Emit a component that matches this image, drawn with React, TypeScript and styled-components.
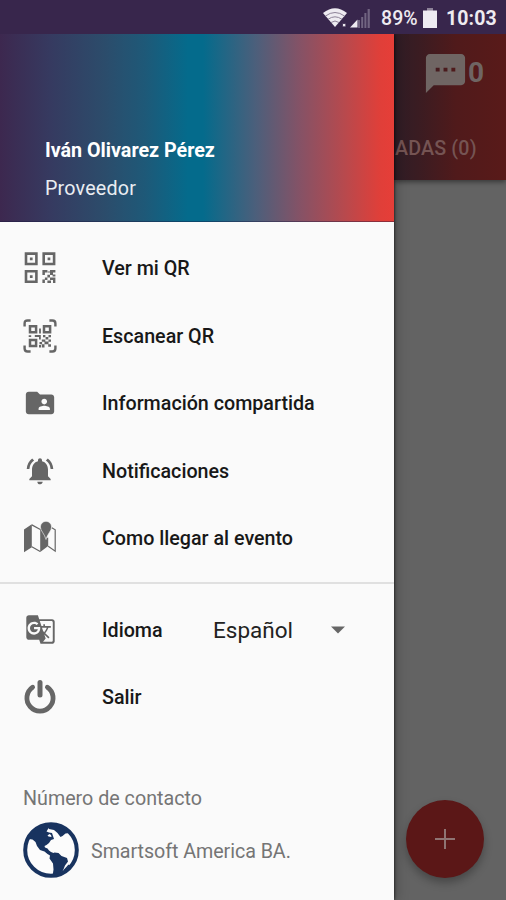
import React from "react";
import styled, { createGlobalStyle } from "styled-components";
import { MdFolderShared, MdNotificationsActive, MdGTranslate, MdSms } from "react-icons/md";

const GlobalStyle = createGlobalStyle`
  * { box-sizing: border-box; }
  body { margin: 0; font-family: Roboto, "Liberation Sans", sans-serif; }
`;

const Screen = styled.div`
  width: 506px;
  height: 900px;
  display: flex;
  flex-direction: column;
  overflow: hidden;
  background: #636363;
`;

const StatusBar = styled.div`
  height: 34px;
  flex: none;
  display: flex;
  align-items: center;
  justify-content: flex-end;
  padding: 2px 12px 0 0;
  background: #38264c;
  color: #eeebf1;
  position: relative;
  z-index: 2;
`;

const StatusText = styled.span<{ $width: number; $bold?: boolean }>`
  width: ${(p) => p.$width}px;
  font-size: 19.5px;
  font-weight: ${(p) => (p.$bold ? 700 : 500)};
  letter-spacing: ${(p) => (p.$bold ? "0.1px" : "0.1px")};
  white-space: nowrap;
`;

const StatusIcon = styled.svg<{ $gap: number }>`
  flex: none;
  margin-right: ${(p) => p.$gap}px;
`;

const Body = styled.div`
  flex: 1;
  display: flex;
  min-height: 0;
`;

const Drawer = styled.aside`
  width: 394px;
  flex: none;
  display: flex;
  flex-direction: column;
  background: #fafafa;
  box-shadow: 0 0 3px rgba(0, 0, 0, 0.9), 2px 0 12px rgba(0, 0, 0, 0.25);
  z-index: 1;
`;

const Profile = styled.header`
  height: 188px;
  flex: none;
  padding: 105px 0 0 45px;
  color: #fff;
  border-bottom: 1px solid rgba(20, 20, 60, 0.4);
  background: linear-gradient(
    90deg,
    #3d284f 0,
    #363a60 50px,
    #2c4c6b 104px,
    #1e5978 145px,
    #046b8c 188px,
    #046b8c 203px,
    #4c5f7b 256px,
    #855266 300px,
    #b8494d 345px,
    #e03f39 380px,
    #e63e38 394px
  );
`;

const Name = styled.div`
  font-size: 19.7px;
  line-height: 24px;
  font-weight: 700;
`;

const Role = styled.div`
  margin-top: 13px;
  font-size: 19.7px;
  line-height: 26px;
  letter-spacing: 0.2px;
  color: #e9edf2;
`;

const Menu = styled.nav<{ $top: number }>`
  padding-top: ${(p) => p.$top}px;
  display: flex;
  flex-direction: column;
`;

const MenuItem = styled.div`
  height: 67.5px;
  display: flex;
  align-items: center;
  padding-left: 23px;
  color: #666;
`;

const Glyph = styled.span`
  width: 34px;
  height: 34px;
  display: flex;
  align-items: center;
  justify-content: center;
  margin-right: 45px;
`;

const Label = styled.span<{ $width?: number }>`
  width: ${(p) => (p.$width ? `${p.$width}px` : "auto")};
  padding-top: 1px;
  font-size: 19.7px;
  font-weight: 500;
  color: #181818;
`;

const Divider = styled.hr`
  width: 100%;
  height: 2px;
  margin: 10px 0 0;
  border: 0;
  flex: none;
  background: #e0e0e0;
`;

const Language = styled.span`
  width: 118px;
  font-size: 22.5px;
  color: #222;
`;

const Contact = styled.section`
  padding: 54px 0 0 23px;
  color: #757575;
  font-size: 19.7px;
`;

const ContactTitle = styled.div`
  line-height: 28px;
`;

const ContactRow = styled.div`
  display: flex;
  align-items: center;
  gap: 12px;
  margin-top: 9px;
`;

const Company = styled.span`
  padding-top: 2px;
  letter-spacing: -0.06px;
`;

const Backdrop = styled.main`
  flex: 1;
  min-width: 0;
  display: flex;
  flex-direction: column;
  justify-content: space-between;
  background: #636363;
`;

const AppBar = styled.div`
  height: 146px;
  flex: none;
  padding: 15px 0 0 28px;
  background: linear-gradient(90deg, #2f1d26 0, #3a1c22 24px, #501a1b 62px, #591a19 112px);
  box-shadow: 0 2px 5px rgba(0, 0, 0, 0.45);
`;

const Messages = styled.div`
  display: flex;
  align-items: center;
  height: 48px;
  color: #6f6563;
`;

const Count = styled.span`
  margin: -2px 0 0 -1px;
  font-size: 28px;
  font-weight: 700;
`;

const Tab = styled.div`
  margin: 39px 0 0 -27px;
  font-size: 19.7px;
  line-height: 26px;
  font-weight: 500;
  letter-spacing: 0.15px;
  color: #755453;
  white-space: nowrap;
`;

const AddButton = styled.div`
  width: 78px;
  height: 78px;
  margin: 0 22px 22.5px auto;
  flex: none;
  display: grid;
  place-items: center;
  border-radius: 50%;
  background: #5b1717;
  box-shadow: 0 5px 9px rgba(0, 0, 0, 0.28);
`;

const QrIcon = () => (
  <svg width="34" height="34" viewBox="0 0 34 34" fill="currentColor">
    <path
      fill="none"
      stroke="currentColor"
      strokeWidth="2.6"
      d="M3 2.6h10.4v10.4H3zM20.7 2.6h10.4v10.4H20.7zM3 20.3h10.4v10.4H3z"
    />
    <path d="M6.9 6.5h2.7v2.7H6.9zM24.6 6.5h2.7v2.7h-2.7zM6.9 24.2h2.7v2.7H6.9z" />
    <path d="M19.4 19h5v2.6h-2.5v2.5h-2.5zM27 19h5.4v2.6H30v2.5h-3v-2.5h-2.3v-1.2H27zM24.4 23.8H27v2.6h-2.6zM21.9 26.4h2.5V29h-2.5zM27 26.4h5.4V32H30v-3h-3zM19.4 28.6h2.5V32h-2.5zM24.4 29.4H28V32h-3.6zM29.6 23.4h2.8v2h-2.8z" />
  </svg>
);

const ScanQrIcon = () => (
  <svg width="34" height="34" viewBox="0 0 34 34" fill="currentColor">
    <path
      fill="none"
      stroke="currentColor"
      strokeWidth="2.4"
      d="M1.6 7.5v-3q0-3 3-3h3M26.4 1.5h3q3 0 3 3v3M1.6 26.5v3q0 3 3 3h3M26.4 32.5h3q3 0 3-3v-3"
    />
    <path
      fill="none"
      stroke="currentColor"
      strokeWidth="2.5"
      d="M7 7.3h6.1v6H7zM21 7.3h6.1v6H21zM7 21h6.1v6H7z"
    />
    <path d="M16.1 9.5h1.8v5h-1.8zM5.7 16.2h2.5v1.8H5.7zM11.8 16h6v4.6H16v-2.500h-4.200zM20 16h2.400v2.200H20zM25.500 16H28v2.200h-2.500zM22.600 18h2.700v2.500h-2.700zM18.800 20.500h3.500v2.200h-3.500zM25.500 20.500H28v2.200h-2.500zM16.500 23h2.600v2.300h-2.600zM21.500 22.600h4v2.600h-4zM18.800 25.200h2.700v3.200h-2.700zM25.200 25.200H28v2.600h-2.800zM16 26h2v2.400h-2z" />
  </svg>
);

const MapIcon = () => (
  <svg width="34" height="34" viewBox="0 0 34 34" fill="currentColor">
    <path d="M1 8.500 8.800 3.300v23L1 31.200zM17.200 8.700l2-1.500 4 9.800 2-.5v8.600l-8 6z" />
    <path
      fill="none"
      stroke="currentColor"
      strokeWidth="1.200"
      d="m8.800 3.900 9 4.800M8.800 25.700l8.400 4.800M25.200 25.200l7 5V8.800l-3.400-2"
    />
    <path
      stroke="#fafafa"
      strokeWidth=".6"
      d="M23 .3a5.600 5.600 0 0 1 5.600 5.600c0 4-4.400 7.200-5.600 12.600-1.200-5.400-5.600-8.600-5.600-12.600A5.600 5.600 0 0 1 23 .3z"
    />
  </svg>
);

const PowerIcon = () => (
  <svg width="34" height="34" viewBox="0 0 34 34" fill="none" stroke="currentColor">
    <path strokeWidth="4.800" strokeLinecap="round" d="M9.600 7.200a13.100 13.100 0 1 0 14.800 0" />
    <path strokeWidth="5" strokeLinecap="round" d="M17 2.600v12.400" />
  </svg>
);

const GlobeIcon = () => (
  <svg width="56" height="56" viewBox="0 0 56 56">
    <circle cx="28" cy="28" r="26" fill="#fcfcfc" />
    <path
      fill="#18335f"
      d="M6 17 9 10 18 4h9l-2 3-1.500 2.500 2.500 1 3 .5 1 3 1 3-3 1-2 3-2.500 2-2 1 .5 1.500 2.500 1 1.500 2 2 1.500 2.500 1 1-.5 4 .5 3 3 5.500 2 1 3.500-3 4-2 5-4 4-4 1.500-2.500.5 1-7-.5-6-3.500-5 .5-3-2.500-1.500-3-2.500-4.500-1.500-3-4-1.500-4-3-2.500z"
    />
    <path fill="#18335f" d="M24 3h10l9 3 3.500 5-4 .5-3 2.500-2 1-3-4-3.500-3-5-1z" />
    <path fill="#fcfcfc" d="m24.500 13.500 2-1.500 1.500 1 .5 2-3-.5z" />
    <path fill="none" stroke="#18335f" strokeWidth="1.200" d="M41 48.500 46 43" />
    <circle cx="28" cy="28" r="25.800" fill="none" stroke="#18335f" strokeWidth="4" />
  </svg>
);

const primary = [
  { label: "Ver mi QR", icon: <QrIcon /> },
  { label: "Escanear QR", icon: <ScanQrIcon /> },
  { label: "Información compartida", icon: <MdFolderShared size={34} /> },
  { label: "Notificaciones", icon: <MdNotificationsActive size={32} /> },
  { label: "Como llegar al evento", icon: <MapIcon /> },
];

export default function App() {
  return (
    <>
      <GlobalStyle />
      <Screen>
        <StatusBar>
          <StatusIcon $gap={3} width="24" height="20" viewBox="0 0 24 20">
            <path fill="#eeebf1" d="M0 5Q12-4.500 24 5L12 19z" />
            <path
              fill="none"
              stroke="#8d8298"
              strokeWidth="1"
              d="M2.500 8q9.500-7 19 0M5 11.300q7-5 14 0M8 14.500q4-3 8 0"
            />
            <path fill="#eeebf1" stroke="#38264c" strokeWidth=".8" d="M19.500 15.500h3.300v3.300h-3.300z" />
          </StatusIcon>
          <StatusIcon $gap={11} width="20" height="20" viewBox="0 0 20 20">
            <path fill="#716481" d="M8 12h2v8H8zM11.200 9h2v11h-2zM14.400 5h2v15h-2zM17.600 1h2.200v19h-2.200z" />
            <path fill="#eeebf1" d="m0 19.500 7.500-8v8z" />
          </StatusIcon>
          <StatusText $width={42}>89%</StatusText>
          <StatusIcon $gap={9} width="14" height="21" viewBox="0 0 14 21">
            <path fill="#8d8298" d="M4 0h6v3H4z" />
            <path fill="#eeebf1" d="M0 2.500h14V20H0z" />
          </StatusIcon>
          <StatusText $width={48} $bold>
            10:03
          </StatusText>
        </StatusBar>
        <Body>
          <Drawer>
            <Profile>
              <Name>Iván Olivarez Pérez</Name>
              <Role>Proveedor</Role>
            </Profile>
            <Menu $top={12.500}>
              {primary.map((item) => (
                <MenuItem key={item.label}>
                  <Glyph>{item.icon}</Glyph>
                  <Label>{item.label}</Label>
                </MenuItem>
              ))}
            </Menu>
            <Divider />
            <Menu $top={12}>
              <MenuItem>
                <Glyph>
                  <MdGTranslate size={31} />
                </Glyph>
                <Label $width={111}>Idioma</Label>
                <Language>Español</Language>
                <svg width="14" height="8" viewBox="0 0 14 8">
                  <path fill="#666" d="M0 .5h14L7 7.500z" />
                </svg>
              </MenuItem>
              <MenuItem>
                <Glyph>
                  <PowerIcon />
                </Glyph>
                <Label>Salir</Label>
              </MenuItem>
            </Menu>
            <Contact>
              <ContactTitle>Número de contacto</ContactTitle>
              <ContactRow>
                <GlobeIcon />
                <Company>Smartsoft America BA.</Company>
              </ContactRow>
            </Contact>
          </Drawer>
          <Backdrop>
            <AppBar>
              <Messages>
                <MdSms size={47} />
                <Count>0</Count>
              </Messages>
              <Tab>ADAS (0)</Tab>
            </AppBar>
            <AddButton>
              <svg width="20" height="20" viewBox="0 0 20 20">
                <path stroke="#8f7473" strokeWidth="2" d="M10 0v20M0 10h20" />
              </svg>
            </AddButton>
          </Backdrop>
        </Body>
      </Screen>
    </>
  );
}
